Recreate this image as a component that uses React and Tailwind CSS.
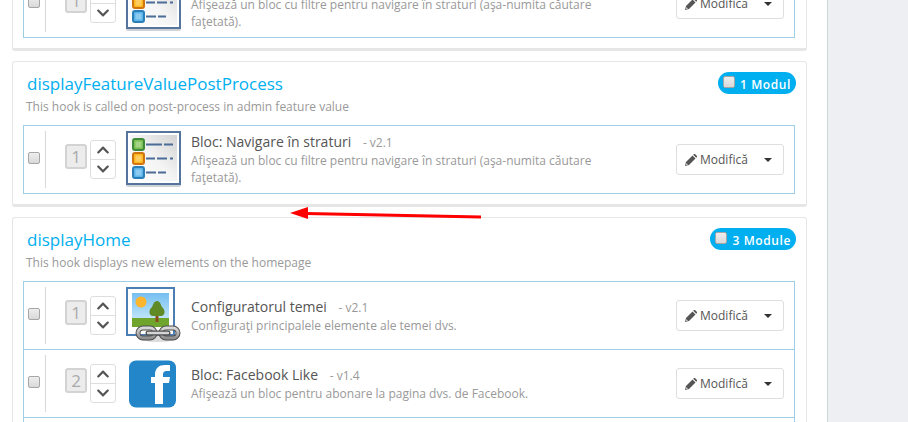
import { FaChevronDown, FaChevronUp } from 'react-icons/fa'

const LAYERED = {
  name: 'Bloc: Navigare în straturi',
  version: 'v2.1',
  description: 'Afişează un bloc cu filtre pentru navigare în straturi (aşa-numita căutare faţetată).',
  Logo: LayeredLogo,
}

const HOME_MODULES = [
  {
    name: 'Configuratorul temei',
    version: 'v2.1',
    description: 'Configuraţi principalele elemente ale temei dvs.',
    Logo: ThemeLogo,
  },
  {
    name: 'Bloc: Facebook Like',
    version: 'v1.4',
    description: 'Afişează un bloc pentru abonare la pagina dvs. de Facebook.',
    Logo: FacebookLogo,
  },
]

function LayeredLogo() {
  const items = [
    { y: 8, edge: '#3f8a3a', fill: '#7cc04f' },
    { y: 22, edge: '#cf7410', fill: '#fdb81e' },
    { y: 36, edge: '#2a7fb8', fill: '#5bb5ea' },
  ]
  return (
    <svg viewBox="0 0 57 57" className="size-[57px] shrink-0" aria-hidden="true">
      <defs>
        <linearGradient id="paper" x1="0" y1="1" x2="1" y2="0">
          <stop offset="0" stopColor="#fff" />
          <stop offset="0.5" stopColor="#f4f4f4" />
          <stop offset="1" stopColor="#d2d2d2" />
        </linearGradient>
      </defs>
      <rect x="1" y="2" width="55" height="54" rx="2" fill="#b9bec5" opacity="0.7" />
      <rect x="2" y="1" width="53" height="52" fill="#fff" stroke="#56759c" strokeWidth="2" />
      <rect x="5" y="4" width="47" height="46" fill="url(#paper)" />
      {items.map(({ y, edge, fill }) => (
        <g key={y}>
          <rect x="8" y={y} width="11" height="11" rx="2" fill={fill} stroke={edge} strokeWidth="2" />
          <rect x="10.500" y={y + 2.5} width="6" height="6" fill="#fff" opacity="0.3" />
        </g>
      ))}
      <g stroke="#4a6c97" strokeWidth="1.800">
        <path d="M21 13.500h16M39 13.500h9" />
        <path d="M21 27.500h9M32 27.500h10M45 27.500h3" />
        <path d="M21 41.500h10M33 41.500h8" />
      </g>
    </svg>
  )
}

function ThemeLogo() {
  return (
    <svg viewBox="0 0 57 57" className="size-[57px] shrink-0" aria-hidden="true">
      <defs>
        <linearGradient id="sky" x1="0" y1="0" x2="0" y2="1">
          <stop offset="0" stopColor="#74bff0" />
          <stop offset="1" stopColor="#d8f0fc" />
        </linearGradient>
        <linearGradient id="steel" x1="0" y1="0" x2="0" y2="1">
          <stop offset="0" stopColor="#d8d8d8" />
          <stop offset="1" stopColor="#8f8f8f" />
        </linearGradient>
      </defs>
      <rect x="2" y="1" width="47" height="47" fill="#fff" stroke="#4a7eb5" strokeWidth="2" />
      <rect x="7" y="6" width="37" height="34" fill="url(#sky)" />
      <rect x="7" y="31" width="37" height="9" fill="#6fa52c" />
      <circle cx="16" cy="15" r="5.500" fill="#fcb52c" />
      <path d="M30.500 27h3v8h-3z" fill="#8b4a1c" />
      <path d="M32 14c3 0 4 4 5 6 4 3 3 9-1 9h-8c-4 0-5-6-1-9 1-2 2-6 5-6z" fill="#5f8a26" />
      <ellipse cx="33" cy="51" rx="20" ry="4" fill="#999" opacity="0.35" />
      <g fill="none">
        <rect x="13" y="41" width="17" height="10" rx="5" stroke="#4f4f4f" strokeWidth="5" />
        <rect x="36" y="41" width="17" height="10" rx="5" stroke="#4f4f4f" strokeWidth="5" />
        <rect x="13" y="41" width="17" height="10" rx="5" stroke="url(#steel)" strokeWidth="3" />
        <rect x="36" y="41" width="17" height="10" rx="5" stroke="url(#steel)" strokeWidth="3" />
        <path d="M23 46h20" stroke="#4f4f4f" strokeWidth="5" strokeLinecap="round" />
        <path d="M23 46h20" stroke="#d5d5d5" strokeWidth="2.500" strokeLinecap="round" />
      </g>
    </svg>
  )
}

function FacebookLogo() {
  return (
    <svg viewBox="0 0 57 57" className="size-[57px] shrink-0" aria-hidden="true">
      <rect x="4" y="5.500" width="47" height="47" rx="7" fill="#2386c8" />
      <path d="M30 49V28h-4v-6h4v-2c0-7 4-10 10-10h5v6h-3c-3 0-4 1-4 4v2h7l-1 6h-6v21z" fill="#fff" />
    </svg>
  )
}

function Pencil() {
  return (
    <svg viewBox="0 0 12 12" className="size-3" aria-hidden="true">
      <path d="M0 12l1-4 6.500-6.500 3 3L4 11z" fill="currentColor" />
      <path d="M8.200.8 9 0h1l2 2v1l-.8.8z" fill="currentColor" />
      <path d="M1.400 9.200l1.400 1.400-1 .3-.7-.7z" fill="#fff" />
    </svg>
  )
}

function ModuleRow({ module, position }) {
  const { name, version, description, Logo } = module
  return (
    <li className="flex items-center border-t border-[#9fcfe6] py-[5px] pr-[10px]">
      <div className="flex h-[57px] w-[22px] shrink-0 items-center border-r border-[#d8d8d8] pb-[3px] pl-1">
        <input
          type="checkbox"
          aria-label={name}
          className="size-3 appearance-none rounded-[2px] border border-[#a6a6a6] bg-linear-to-b from-[#eeeeee] to-[#d9d9d9]"
        />
      </div>
      <span className="mb-[6px] ml-[19px] flex h-[25px] w-[22px] shrink-0 items-center justify-center rounded-[3px] border-2 border-[#d3d3d3] bg-[#ececec] text-[17px] text-[#aaaaaa]">
        {position}
      </span>
      <div className="ml-[3px] flex w-[26px] shrink-0 flex-col divide-y divide-[#dedede] rounded-[3px] border border-[#dedede] text-[#555555]">
        <button type="button" aria-label="Mută în sus" className="flex h-[19px] items-center justify-center">
          <FaChevronUp className="size-[14px]" />
        </button>
        <button type="button" aria-label="Mută în jos" className="flex h-[18px] items-center justify-center">
          <FaChevronDown className="size-[14px]" />
        </button>
      </div>
      <div className="ml-[9px] shrink-0"><Logo /></div>
      <div className="ml-[9px] flex-1 pb-px">
        <div className="text-sm leading-5 text-[#555555]">
          {name} <span className="ml-2 text-xs text-[#999999]">- {version}</span>
        </div>
        <p className="max-w-[420px] text-xs leading-[17px] text-[#999999]">{description}</p>
      </div>
      <div className="flex h-[31px] w-[108px] shrink-0 items-center rounded-[3px] border border-[#dedede] text-xs text-[#555555]">
        <button type="button" className="flex flex-1 items-center gap-[3px] pl-2">
          <Pencil />
          Modifică
        </button>
        <button type="button" aria-label="Mai multe" className="flex h-full w-[30px] items-center justify-center">
          <svg viewBox="0 0 8 4" className="h-1 w-2" aria-hidden="true"><path d="M0 0h8L4 4z" fill="#333" /></svg>
        </button>
      </div>
    </li>
  )
}

function Hook({ title, description, count, children }) {
  return (
    <section className="rounded-[3px] border border-b-3 border-[#e6e6e6] p-[10px]">
      {title && (
        <header className="flex h-[53px] items-start justify-between">
          <div className="pl-[3px]">
            <h2 className="pl-px text-[17px] leading-6 text-[#00aff0]">{title}</h2>
            <p className="text-xs leading-[22px] text-[#999999]">{description}</p>
          </div>
          <label className="flex h-[22px] items-center gap-[5px] rounded-full bg-[#00aff0] px-[5px] text-xs font-semibold tracking-wider text-white">
            <input
              type="checkbox"
              className="mb-[2px] size-3 appearance-none rounded-[2px] border border-[#a6a6a6] bg-linear-to-b from-[#eeeeee] to-[#d9d9d9]"
            />
            <span className="pt-[3px]">{count}</span>
          </label>
        </header>
      )}
      <ul className="mr-px border-x border-b border-[#9fcfe6]">{children}</ul>
    </section>
  )
}

export default function App() {
  return (
    <div className="relative flex h-screen overflow-hidden bg-white font-['Open_Sans',sans-serif]">
      <main className="-mt-[42px] flex flex-1 flex-col gap-[10px] pl-3 pr-5">
        <Hook>
          <ModuleRow module={LAYERED} position={1} />
        </Hook>
        <Hook
          title="displayFeatureValuePostProcess"
          description="This hook is called on post-process in admin feature value"
          count="1 Modul"
        >
          <ModuleRow module={LAYERED} position={1} />
        </Hook>
        <Hook
          title="displayHome"
          description="This hook displays new elements on the homepage"
          count="3 Module"
        >
          {HOME_MODULES.map((m, i) => (
            <ModuleRow key={m.name} module={m} position={i + 1} />
          ))}
          <li className="h-[68px] border-t border-[#9fcfe6]" />
        </Hook>
      </main>
      <aside className="w-[81px] shrink-0 border-l border-[#cdd5d5] bg-[#eeeff2]" />
      {/* arrow pointing at the gap between the two hooks */}
      <svg viewBox="0 0 192 12" className="absolute left-[290px] top-[207px] h-3 w-48" aria-hidden="true">
        <path d="M16 6.500 191 10" stroke="#f00" strokeWidth="3" />
        <path d="M0 6 18 0v12z" fill="#f00" />
      </svg>
    </div>
  )
}
